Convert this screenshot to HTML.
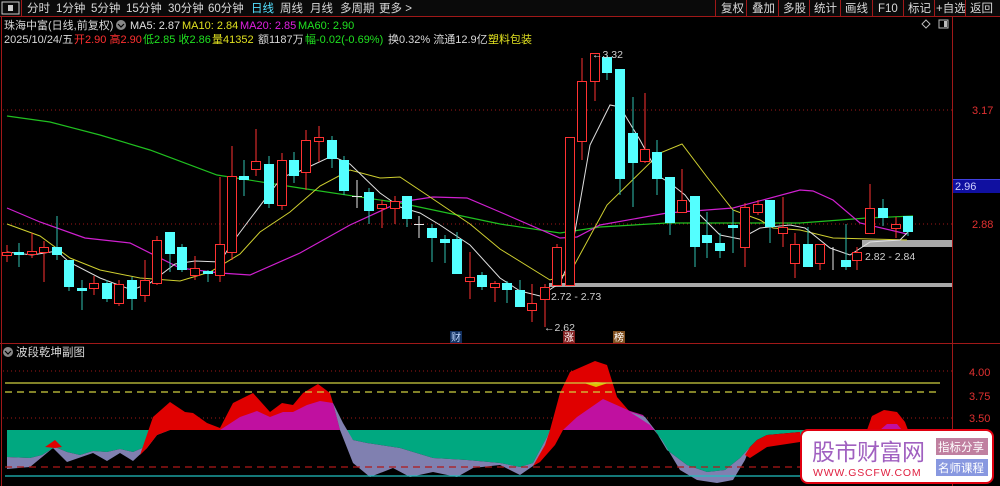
<!DOCTYPE html>
<html><head><meta charset="utf-8"><style>
html,body{margin:0;padding:0;background:#000;width:1000px;height:486px;overflow:hidden}
svg text{font-family:"Liberation Sans","Noto Sans CJK SC",sans-serif}
</style></head><body>
<svg width="1000" height="486" viewBox="0 0 1000 486" xmlns="http://www.w3.org/2000/svg">
<rect width="1000" height="486" fill="#000"/>
<!-- top bar -->
<rect x="0" y="0" width="1000" height="16" fill="#0a0a0a"/>
<line x1="0" y1="16.5" x2="1000" y2="16.5" stroke="#a01818"/>
<rect x="2" y="2" width="17" height="12" fill="none" stroke="#ccc" stroke-width="1"/>
<rect x="8" y="5" width="5" height="6" fill="#ccc"/>
<line x1="21.5" y1="0" x2="21.5" y2="16" stroke="#a01818"/>
<g font-size="11.5" fill="#d8d8d8">
<text x="27" y="12">分时</text><text x="56" y="12">1分钟</text><text x="91" y="12">5分钟</text><text x="126" y="12">15分钟</text><text x="168" y="12">30分钟</text><text x="208" y="12">60分钟</text>
<text x="251" y="12" fill="#54e0ff">日线</text><text x="280" y="12">周线</text><text x="310" y="12">月线</text><text x="340" y="12">多周期</text><text x="379" y="12">更多 &gt;</text>
<text x="721" y="12">复权</text><text x="752" y="12">叠加</text><text x="783" y="12">多股</text><text x="814" y="12">统计</text><text x="845" y="12">画线</text><text x="878" y="12">F10</text><text x="908" y="12">标记</text><text x="936" y="12">+自选</text><text x="970" y="12">返回</text>
</g>
<g stroke="#a01818"><line x1="715.5" y1="0" x2="715.5" y2="16"/><line x1="746.5" y1="0" x2="746.5" y2="16"/><line x1="778.5" y1="0" x2="778.5" y2="16"/><line x1="809.5" y1="0" x2="809.5" y2="16"/><line x1="840.5" y1="0" x2="840.5" y2="16"/><line x1="872.5" y1="0" x2="872.5" y2="16"/><line x1="903.5" y1="0" x2="903.5" y2="16"/><line x1="934.5" y1="0" x2="934.5" y2="16"/><line x1="965.5" y1="0" x2="965.5" y2="16"/></g>
<!-- borders -->
<line x1="1.5" y1="16" x2="1.5" y2="486" stroke="#a01818"/>
<line x1="952.5" y1="16" x2="952.5" y2="486" stroke="#a01818"/>
<line x1="0" y1="343.5" x2="1000" y2="343.5" stroke="#a01818"/>
<!-- info rows -->
<g font-size="11">
<text x="4" y="29" fill="#d8d8d8">珠海中富(日线,前复权)</text>
<circle cx="121" cy="25" r="5" fill="#888"/><path d="M118 24 l3 3 l3 -3" stroke="#000" fill="none" stroke-width="1.2"/>
<text x="130" y="29" fill="#e0e0e0">MA5: 2.87</text>
<text x="182" y="29" fill="#e0e020">MA10: 2.84</text>
<text x="240" y="29" fill="#e020e0">MA20: 2.85</text>
<text x="298" y="29" fill="#20e020">MA60: 2.90</text>
<text x="4" y="43" fill="#d8d8d8">2025/10/24/五</text>
<text x="74" y="43" fill="#ff3030">开2.90 高2.90</text>
<text x="143" y="43" fill="#20e020">低2.85 收2.86</text>
<text x="212" y="43" fill="#e0e020">量41352</text>
<text x="258" y="43" fill="#d8d8d8">额1187万</text>
<text x="305" y="43" fill="#20e020">幅-0.02(-0.69%)</text>
<text x="388" y="43" fill="#d8d8d8">换0.32% 流通12.9亿</text>
<text x="488" y="43" fill="#e0e020">塑料包装</text>
</g>
<path d="M926 20 l4 4 l-4 4 l-4 -4z" fill="none" stroke="#bbb"/>
<rect x="939" y="20" width="9" height="8" fill="none" stroke="#bbb"/><rect x="944" y="21" width="3" height="6" fill="#bbb"/>
<!-- grid -->
<g stroke="#a01818" stroke-dasharray="1,3"><line x1="3" y1="110" x2="952" y2="110"/><line x1="3" y1="224" x2="952" y2="224"/></g>
<text x="972" y="114" font-size="11" fill="#e03030">3.17</text>
<text x="972" y="228" font-size="11" fill="#e03030">2.88</text>
<rect x="953" y="179" width="47" height="14" fill="#1010a0"/><line x1="953" y1="179.5" x2="1000" y2="179.5" stroke="#4040e0"/>
<text x="955" y="190" font-size="11" fill="#d0d0ff">2.96</text>
<!-- gray bars -->
<rect x="549" y="283" width="403" height="4" fill="#a8a8a8"/>
<rect x="862" y="240" width="90" height="7" fill="#a8a8a8"/>
<!-- MA lines -->
<polyline fill="none" stroke="#20c020" stroke-width="1.2" points="7,116 50,122 100,135 150,150 217,175 300,188 400,203 500,224 560,233 600,227 667,223 800,223 867,218 913,216"/>
<polyline fill="none" stroke="#d020d0" stroke-width="1.2" points="7,208 40,222 85,238 130,243 180,268 220,273 250,275 300,253 350,225 400,202 433,197 467,198 500,212 560,238 577,237 600,225 667,213 733,208 800,190 813,191 833,200 860,223 907,234"/>
<polyline fill="none" stroke="#d0d030" stroke-width="1" points="7,224 40,236 70,258 100,270 140,278 180,281 210,272 240,254 260,232 290,212 320,186 350,170 380,178 400,177 430,197 470,224 500,249 550,280 570,273 607,205 660,153 682,144 707,177 733,210 760,220 773,228 800,230 833,238 907,240"/>
<polyline fill="none" stroke="#e0e0e0" stroke-width="1" points="7,252 32,255 57,251 69,262 100,278 132,290 150,283 175,264 195,261 220,262 232,243 250,219 282,177 300,171 332,156 350,164 380,193 400,207 420,213 440,225 470,245 500,278 520,291 540,296 560,283 570,260 590,145 610,105 620,107 640,140 660,177 670,183 685,195 700,215 720,235 740,239 760,228 790,225 805,228 830,248 850,255 870,242 900,240 908,232"/>
<!-- candles -->
<g stroke-width="1">
<g stroke="#ff3232" fill="#000">
<line x1="7" y1="245" x2="7" y2="262"/><rect x="2.5" y="252.5" width="9" height="3"/>
<line x1="32" y1="233" x2="32" y2="258"/><rect x="27.5" y="251.5" width="9" height="3"/>
<line x1="44" y1="241" x2="44" y2="282"/><rect x="39.5" y="247.5" width="9" height="5"/>
<line x1="94" y1="276" x2="94" y2="295"/><rect x="89.5" y="283.5" width="9" height="5"/>
<line x1="119" y1="280" x2="119" y2="306"/><rect x="114.5" y="284.5" width="9" height="19"/>
<line x1="145" y1="260" x2="145" y2="302"/><rect x="140.5" y="280.5" width="9" height="15"/>
<line x1="157" y1="236" x2="157" y2="285"/><rect x="152.5" y="240.5" width="9" height="43"/>
<line x1="195" y1="256" x2="195" y2="280"/><rect x="190.5" y="268.5" width="9" height="7"/>
<line x1="220" y1="177" x2="220" y2="282"/><rect x="215.5" y="244.5" width="9" height="31"/>
<line x1="232" y1="146" x2="232" y2="260"/><rect x="227.5" y="176.5" width="9" height="76"/>
<line x1="256" y1="129" x2="256" y2="176"/><rect x="251.5" y="161.5" width="9" height="8"/>
<line x1="282" y1="153" x2="282" y2="210"/><rect x="277.5" y="160.5" width="9" height="45"/>
<line x1="306" y1="130" x2="306" y2="190"/><rect x="301.5" y="140.5" width="9" height="32"/>
<line x1="319" y1="126" x2="319" y2="162"/><rect x="314.5" y="137.5" width="9" height="4"/>
<line x1="382" y1="200" x2="382" y2="228"/><rect x="377.5" y="204.5" width="9" height="4"/>
<line x1="395" y1="196" x2="395" y2="224"/><rect x="390.5" y="201.5" width="9" height="7"/>
<line x1="470" y1="252" x2="470" y2="299"/><rect x="465.5" y="277.5" width="9" height="4"/>
<line x1="495" y1="281" x2="495" y2="302"/><rect x="490.5" y="283.5" width="9" height="4"/>
<line x1="532" y1="284" x2="532" y2="322"/><rect x="527.5" y="303.5" width="9" height="7"/>
<line x1="545" y1="284" x2="545" y2="327"/><rect x="540.5" y="287.5" width="9" height="12"/>
<line x1="557" y1="244" x2="557" y2="285"/><rect x="552.5" y="247.5" width="9" height="38"/>
<rect x="565.5" y="137.5" width="9" height="148"/>
<line x1="582" y1="58" x2="582" y2="160"/><rect x="577.5" y="81.5" width="9" height="60"/>
<line x1="595" y1="53" x2="595" y2="101"/><rect x="590.5" y="53.5" width="9" height="28"/>
<line x1="645" y1="93" x2="645" y2="163"/><rect x="640.5" y="149.5" width="9" height="12"/>
<line x1="682" y1="169" x2="682" y2="212"/><rect x="677.5" y="200.5" width="9" height="12"/>
<line x1="745" y1="203" x2="745" y2="267"/><rect x="740.5" y="207.5" width="9" height="40"/>
<line x1="758" y1="200" x2="758" y2="215"/><rect x="753.5" y="204.5" width="9" height="8"/>
<line x1="783" y1="197" x2="783" y2="247"/><rect x="778.5" y="227.5" width="9" height="6"/>
<line x1="795" y1="233" x2="795" y2="278"/><rect x="790.5" y="244.5" width="9" height="19"/>
<line x1="820" y1="244" x2="820" y2="270"/><rect x="815.5" y="244.5" width="9" height="19"/>
<line x1="857" y1="247" x2="857" y2="270"/><rect x="852.5" y="252.5" width="9" height="8"/>
<line x1="870" y1="184" x2="870" y2="233"/><rect x="865.5" y="208.5" width="9" height="25"/>
<line x1="896" y1="217" x2="896" y2="238"/><rect x="891.5" y="224.5" width="9" height="4"/>
</g>
<g stroke="#30c0b0" fill="#54ffff">
<line x1="19" y1="243" x2="19" y2="267"/><rect x="14" y="252" width="10" height="3" stroke="none"/>
<line x1="57" y1="216" x2="57" y2="260"/><rect x="52" y="247" width="10" height="8" stroke="none"/>
<line x1="69" y1="260" x2="69" y2="291"/><rect x="64" y="260" width="10" height="27" stroke="none"/>
<line x1="82" y1="280" x2="82" y2="310"/><rect x="77" y="288" width="10" height="3" stroke="none"/>
<line x1="107" y1="280" x2="107" y2="302"/><rect x="102" y="283" width="10" height="16" stroke="none"/>
<line x1="132" y1="277" x2="132" y2="310"/><rect x="127" y="280" width="10" height="19" stroke="none"/>
<line x1="170" y1="232" x2="170" y2="272"/><rect x="165" y="232" width="10" height="22" stroke="none"/>
<line x1="182" y1="244" x2="182" y2="272"/><rect x="177" y="247" width="10" height="23" stroke="none"/>
<line x1="208" y1="270" x2="208" y2="282"/><rect x="203" y="271" width="10" height="3" stroke="none"/>
<line x1="244" y1="160" x2="244" y2="196"/><rect x="239" y="176" width="10" height="4" stroke="none"/>
<line x1="269" y1="156" x2="269" y2="208"/><rect x="264" y="164" width="10" height="40" stroke="none"/>
<line x1="294" y1="152" x2="294" y2="183"/><rect x="289" y="160" width="10" height="16" stroke="none"/>
<line x1="332" y1="136" x2="332" y2="168"/><rect x="327" y="140" width="10" height="19" stroke="none"/>
<line x1="344" y1="156" x2="344" y2="195"/><rect x="339" y="160" width="10" height="31" stroke="none"/>
<line x1="369" y1="188" x2="369" y2="224"/><rect x="364" y="192" width="10" height="19" stroke="none"/>
<line x1="407" y1="196" x2="407" y2="227"/><rect x="402" y="196" width="10" height="23" stroke="none"/>
<line x1="432" y1="224" x2="432" y2="262"/><rect x="427" y="228" width="10" height="10" stroke="none"/>
<line x1="445" y1="235" x2="445" y2="263"/><rect x="440" y="239" width="10" height="4" stroke="none"/>
<line x1="457" y1="232" x2="457" y2="274"/><rect x="452" y="239" width="10" height="35" stroke="none"/>
<line x1="482" y1="272" x2="482" y2="290"/><rect x="477" y="275" width="10" height="12" stroke="none"/>
<line x1="507" y1="281" x2="507" y2="303"/><rect x="502" y="283" width="10" height="7" stroke="none"/>
<line x1="520" y1="280" x2="520" y2="307"/><rect x="515" y="290" width="10" height="17" stroke="none"/>
<line x1="607" y1="55" x2="607" y2="80"/><rect x="602" y="57" width="10" height="16" stroke="none"/>
<line x1="620" y1="69" x2="620" y2="195"/><rect x="615" y="69" width="10" height="110" stroke="none"/>
<line x1="633" y1="97" x2="633" y2="207"/><rect x="628" y="133" width="10" height="30" stroke="none"/>
<line x1="657" y1="140" x2="657" y2="195"/><rect x="652" y="152" width="10" height="27" stroke="none"/>
<line x1="670" y1="177" x2="670" y2="235"/><rect x="665" y="177" width="10" height="46" stroke="none"/>
<line x1="695" y1="196" x2="695" y2="267"/><rect x="690" y="196" width="10" height="51" stroke="none"/>
<line x1="707" y1="212" x2="707" y2="258"/><rect x="702" y="235" width="10" height="8" stroke="none"/>
<line x1="720" y1="233" x2="720" y2="258"/><rect x="715" y="243" width="10" height="8" stroke="none"/>
<line x1="733" y1="210" x2="733" y2="253"/><rect x="728" y="225" width="10" height="3" stroke="none"/>
<line x1="770" y1="200" x2="770" y2="243"/><rect x="765" y="200" width="10" height="27" stroke="none"/>
<line x1="808" y1="227" x2="808" y2="267"/><rect x="803" y="244" width="10" height="23" stroke="none"/>
<line x1="846" y1="224" x2="846" y2="270"/><rect x="841" y="260" width="10" height="7" stroke="none"/>
<line x1="883" y1="199" x2="883" y2="226"/><rect x="878" y="208" width="10" height="10" stroke="none"/>
<line x1="908" y1="216" x2="908" y2="236"/><rect x="903" y="216" width="10" height="16" stroke="none"/>
</g>
<g stroke="#e8e8e8">
<line x1="357" y1="180" x2="357" y2="208"/><line x1="352" y1="196.5" x2="362" y2="196.5"/>
<line x1="419" y1="216" x2="419" y2="238"/><line x1="414" y1="224.5" x2="424" y2="224.5"/>
<line x1="833" y1="247" x2="833" y2="270"/>
</g>
</g>
<!-- labels -->
<g font-size="10.5" fill="#d0d0d0">
<text x="592" y="58">←3.32</text>
<text x="551" y="300">2.72 - 2.73</text>
<text x="865" y="260">2.82 - 2.84</text>
<text x="544" y="331">←2.62</text>
</g>
<g font-size="10">
<rect x="450" y="331" width="12" height="12" fill="#123060"/><text x="451" y="341" fill="#c0d8ff">财</text>
<rect x="563" y="331" width="12" height="12" fill="#802020"/><text x="564" y="341" fill="#fff">涨</text>
<rect x="613" y="331" width="12" height="12" fill="#805020"/><text x="614" y="341" fill="#fff">榜</text>
</g>
<!-- sub chart -->
<circle cx="8" cy="352" r="5" fill="#888"/><path d="M5 351 l3 3 l3 -3" stroke="#000" fill="none" stroke-width="1.2"/>
<text x="16" y="356" font-size="11.5" fill="#d8d8d8">波段乾坤副图</text>
<g stroke="#a01818" stroke-dasharray="1,3"><line x1="3" y1="371" x2="952" y2="371"/><line x1="3" y1="418" x2="952" y2="418"/></g>
<g font-size="11" fill="#e03030"><text x="969" y="376">4.00</text><text x="969" y="400">3.75</text><text x="969" y="422">3.50</text></g>

<!-- Section A -->
<polygon fill="#00a880" points="7,430 170,430 157,433 147,446 133,452 120,449 107,452 93,451 80,455 67,452 55,447 42,455 30,458 7,457"/>
<polygon fill="#8080b0" points="7,457 30,458 42,455 55,447 67,452 80,455 93,451 107,452 120,449 133,452 147,446 157,433 170,430 157,435 147,448 133,461 120,453 107,461 93,453 67,462 53,448 30,467 7,469"/>
<polygon fill="#e00000" points="45,447 55,440 62,447 55,448"/>
<!-- red/magenta mid -->
<polygon fill="#e00000" points="140,455 153,417 170,402 185,412 193,413 207,423 220,428 233,403 253,393 270,412 282,403 293,405 303,393 318,384 330,393 333,403 340,430 170,430 157,435 147,448"/>
<polygon fill="#c010a0" points="220,430 240,417 257,411 270,417 283,412 293,412 307,405 320,401 333,403 340,430"/>
<!-- Section B -->
<polygon fill="#00a880" points="345,430 550,430 547,437 533,463 520,467 500,463 467,460 433,458 400,448 367,443 353,440"/>
<polygon fill="#8080b0" points="333,403 343,423 353,440 367,443 400,448 433,458 467,460 500,463 520,467 533,463 547,437 550,430 550,450 533,466 520,475 500,465 473,468 457,477 433,472 410,477 393,468 370,477 353,463 340,430"/>
<!-- red up 2 -->
<polygon fill="#e00000" points="533,466 545,445 550,430 560,393 570,372 595,361 607,365 617,397 630,412 655,430 563,430 555,445 540,462"/>
<polygon fill="#c010a0" points="563,430 577,417 603,399 630,411 643,415 655,430"/>
<polygon fill="#e0c000" points="584,383 596,382 608,383 596,387"/>
<!-- Section C -->
<polygon fill="#00a880" points="655,430 750,430 750,447 740,458 725,470 707,472 687,465 667,450"/>
<polygon fill="#8080b0" points="630,412 645,417 655,430 667,450 687,465 707,472 725,470 740,458 750,447 745,460 733,480 717,483 697,480 680,470 662,440 650,425"/>
<!-- Section D -->
<polygon fill="#00a880" points="750,430 800,430 800,432 767,435 757,440 750,447"/>
<polygon fill="#e00000" points="745,455 750,447 757,440 767,435 800,432 800,442 767,447 750,458"/>
<polygon fill="#00a880" points="800,430 940,430 940,458 800,458"/>
<polygon fill="#e00000" points="867,430 872,416 884,410 897,412 905,422 908,430"/>
<polygon fill="#c010a0" points="880,430 887,424 897,424 902,430"/>
<!-- level lines -->
<line x1="5" y1="383" x2="940" y2="383" stroke="#d0d040" stroke-width="1.2"/>
<line x1="5" y1="392" x2="940" y2="392" stroke="#d0d040" stroke-width="1.2" stroke-dasharray="7,5"/>
<line x1="5" y1="467" x2="940" y2="467" stroke="#b01818" stroke-width="1.2" stroke-dasharray="7,5"/>
<line x1="5" y1="476" x2="940" y2="476" stroke="#20c0c0" stroke-width="1.2"/>
<!-- watermark -->
<rect x="801" y="430" width="192" height="53" rx="7" fill="#fff" stroke="#e00010" stroke-width="2"/>
<text x="812" y="460" font-size="23" fill="#a060c0" letter-spacing="-0.5">股市财富网</text>
<text x="813" y="476" font-size="10.5" fill="#e02040" font-family="'Liberation Serif',serif" letter-spacing="0.8">WWW.GSCFW.COM</text>
<rect x="936" y="438" width="52" height="17" fill="#c080a0"/>
<text x="938" y="451" font-size="11.5" fill="#fff">指标分享</text>
<rect x="936" y="459" width="52" height="17" fill="#8898e0"/>
<text x="938" y="472" font-size="11.5" fill="#fff">名师课程</text>
</svg>
</body></html>
